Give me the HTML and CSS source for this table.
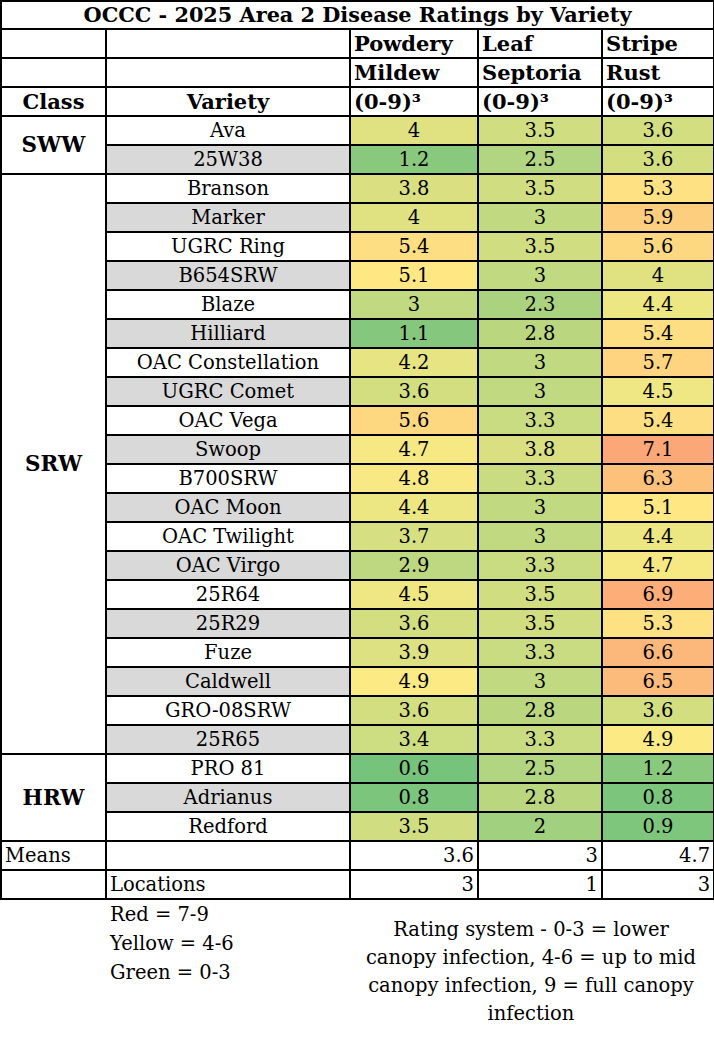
FILE: index.html
```html
<!DOCTYPE html>
<html>
<head>
<meta charset="utf-8">
<link rel="stylesheet" href="styles.css">
</head>
<body>
<table class="ratings">
  <colgroup>
    <col class="c-class"><col class="c-var"><col class="c-pm"><col class="c-leaf"><col class="c-rust">
  </colgroup>
  <tr><td colspan="5" class="title">OCCC - 2025 Area 2 Disease Ratings by Variety</td></tr>
  <tr><td></td><td></td><td class="hd">Powdery</td><td class="hd">Leaf</td><td class="hd">Stripe</td></tr>
  <tr><td></td><td></td><td class="hd">Mildew</td><td class="hd">Septoria</td><td class="hd">Rust</td></tr>
  <tr><td class="hc">Class</td><td class="hc">Variety</td><td class="hd">(0-9)³</td><td class="hd">(0-9)³</td><td class="hd">(0-9)³</td></tr>

  <tr><td rowspan="2" class="cls">SWW</td><td class="var">Ava</td><td class="v">4</td><td class="v">3.5</td><td class="v">3.6</td></tr>
  <tr><td class="var alt">25W38</td><td class="v">1.2</td><td class="v">2.5</td><td class="v">3.6</td></tr>

  <tr><td rowspan="20" class="cls">SRW</td><td class="var">Branson</td><td class="v">3.8</td><td class="v">3.5</td><td class="v">5.3</td></tr>
  <tr><td class="var alt">Marker</td><td class="v">4</td><td class="v">3</td><td class="v">5.9</td></tr>
  <tr><td class="var">UGRC Ring</td><td class="v">5.4</td><td class="v">3.5</td><td class="v">5.6</td></tr>
  <tr><td class="var alt">B654SRW</td><td class="v">5.1</td><td class="v">3</td><td class="v">4</td></tr>
  <tr><td class="var">Blaze</td><td class="v">3</td><td class="v">2.3</td><td class="v">4.4</td></tr>
  <tr><td class="var alt">Hilliard</td><td class="v">1.1</td><td class="v">2.8</td><td class="v">5.4</td></tr>
  <tr><td class="var">OAC Constellation</td><td class="v">4.2</td><td class="v">3</td><td class="v">5.7</td></tr>
  <tr><td class="var alt">UGRC Comet</td><td class="v">3.6</td><td class="v">3</td><td class="v">4.5</td></tr>
  <tr><td class="var">OAC Vega</td><td class="v">5.6</td><td class="v">3.3</td><td class="v">5.4</td></tr>
  <tr><td class="var alt">Swoop</td><td class="v">4.7</td><td class="v">3.8</td><td class="v">7.1</td></tr>
  <tr><td class="var">B700SRW</td><td class="v">4.8</td><td class="v">3.3</td><td class="v">6.3</td></tr>
  <tr><td class="var alt">OAC Moon</td><td class="v">4.4</td><td class="v">3</td><td class="v">5.1</td></tr>
  <tr><td class="var">OAC Twilight</td><td class="v">3.7</td><td class="v">3</td><td class="v">4.4</td></tr>
  <tr><td class="var alt">OAC Virgo</td><td class="v">2.9</td><td class="v">3.3</td><td class="v">4.7</td></tr>
  <tr><td class="var">25R64</td><td class="v">4.5</td><td class="v">3.5</td><td class="v">6.9</td></tr>
  <tr><td class="var alt">25R29</td><td class="v">3.6</td><td class="v">3.5</td><td class="v">5.3</td></tr>
  <tr><td class="var">Fuze</td><td class="v">3.9</td><td class="v">3.3</td><td class="v">6.6</td></tr>
  <tr><td class="var alt">Caldwell</td><td class="v">4.9</td><td class="v">3</td><td class="v">6.5</td></tr>
  <tr><td class="var">GRO-08SRW</td><td class="v">3.6</td><td class="v">2.8</td><td class="v">3.6</td></tr>
  <tr><td class="var alt">25R65</td><td class="v">3.4</td><td class="v">3.3</td><td class="v">4.9</td></tr>

  <tr><td rowspan="3" class="cls">HRW</td><td class="var">PRO 81</td><td class="v">0.6</td><td class="v">2.5</td><td class="v">1.2</td></tr>
  <tr><td class="var alt">Adrianus</td><td class="v">0.8</td><td class="v">2.8</td><td class="v">0.8</td></tr>
  <tr><td class="var">Redford</td><td class="v">3.5</td><td class="v">2</td><td class="v">0.9</td></tr>

  <tr><td class="lab">Means</td><td></td><td class="r">3.6</td><td class="r">3</td><td class="r">4.7</td></tr>
  <tr><td></td><td class="lab">Locations</td><td class="r">3</td><td class="r">1</td><td class="r">3</td></tr>
</table>

<div class="notes">
  <div class="legend">
    <div>Red = 7-9</div>
    <div>Yellow = 4-6</div>
    <div>Green = 0-3</div>
  </div>
  <div class="system">Rating system - 0-3 = lower<br>canopy infection, 4-6 = up to mid<br>canopy infection, 9 = full canopy<br>infection</div>
</div>
<script src="script.js"></script>
</body>
</html>
```

FILE: styles.css
```css
html, body {
  margin: 0;
  padding: 0;
  background: #ffffff;
}
body {
  font-family: "DejaVu Serif", "Liberation Serif", serif;
  color: #000;
  width: 714px;
}
.ratings {
  border-collapse: collapse;
  table-layout: fixed;
  width: 713px;
  font-size: 19.5px;
}
.c-class { width: 105px; }
.c-var { width: 244px; }
.c-pm { width: 128px; }
.c-leaf { width: 124px; }
.c-rust { width: 112px; }

.ratings td {
  border: 2px solid #000;
  height: 27px;
  padding: 0 3px;
  line-height: 22px;
  vertical-align: middle;
  white-space: nowrap;
  overflow: hidden;
}
.ratings td.title {
  text-align: center;
  font-weight: bold;
  font-size: 20.8px;
  height: 26px;
}
.ratings td.hd {
  font-weight: bold;
  text-align: left;
  font-size: 21px;
}
.hc {
  font-weight: bold;
  text-align: center;
  font-size: 21px;
}
.cls {
  font-weight: bold;
  text-align: center;
  font-size: 21.5px;
}
.var { text-align: center; }
.var.alt { background: #d9d9d9; }
.v { text-align: center; }
.r { text-align: right; }
.lab { text-align: left; }

.notes {
  display: grid;
  grid-template-columns: 105px 244px 364px;
  font-size: 19.5px;
}
.legend {
  grid-column: 2;
  padding-left: 5px;
  line-height: 29px;
}
.system {
  grid-column: 3;
  text-align: center;
  padding-top: 16px;
  line-height: 28px;
}
```

FILE: script.js
```js
(function () {
  var stops = [
    [0, [99, 190, 123]],
    [5, [255, 235, 132]],
    [9, [248, 105, 107]]
  ];
  function colorFor(v) {
    var a = stops[0], b = stops[1];
    if (v > 5) { a = stops[1]; b = stops[2]; }
    var t = (v - a[0]) / (b[0] - a[0]);
    t = Math.max(0, Math.min(1, t));
    var c = [0, 1, 2].map(function (i) {
      return Math.round(a[1][i] + (b[1][i] - a[1][i]) * t);
    });
    return "rgb(" + c.join(",") + ")";
  }
  var cells = document.querySelectorAll("td.v");
  for (var i = 0; i < cells.length; i++) {
    var v = parseFloat(cells[i].textContent);
    cells[i].style.backgroundColor = colorFor(v);
  }
})();
```
